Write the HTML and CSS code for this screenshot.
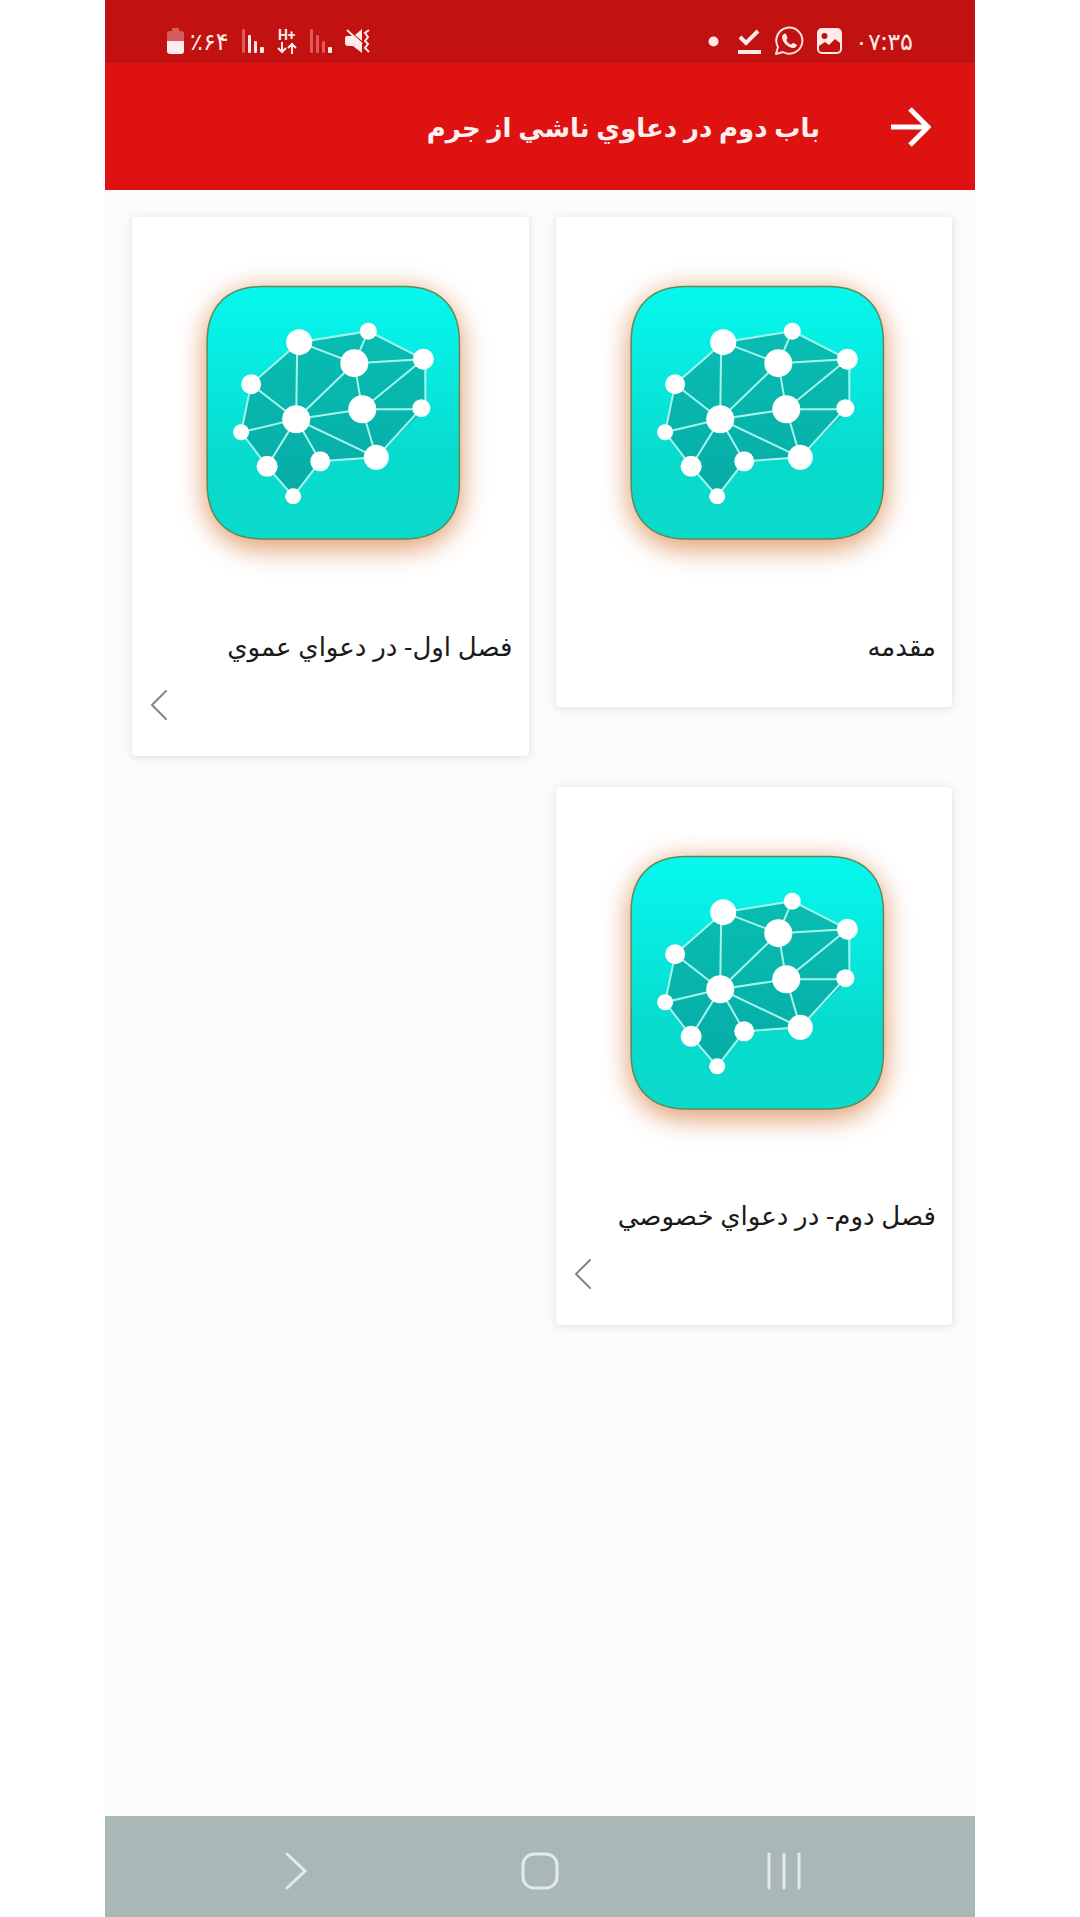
FILE: index.html
```html
<!DOCTYPE html>
<html lang="fa" dir="rtl">
<head>
  <meta charset="UTF-8" />
  <meta name="viewport" content="width=device-width, initial-scale=1.0"/>
  <title>باب دوم در دعاوي ناشي از جرم</title>
  <link rel="stylesheet" href="styles.css">
</head>
<body>

  <!-- shared drawings -->
  <svg class="defs" width="0" height="0" aria-hidden="true">
    <defs>
      <linearGradient id="tileFill" x1="0" y1="0" x2="0" y2="1">
        <stop offset="0" stop-color="#06f8ee"/>
        <stop offset="0.35" stop-color="#07e9df"/>
        <stop offset="0.7" stop-color="#08dacc"/>
        <stop offset="1" stop-color="#0adbcd"/>
      </linearGradient>
      <linearGradient id="brainFill" x1="0" y1="0" x2="0" y2="1">
        <stop offset="0" stop-color="#08bdb3"/>
        <stop offset="1" stop-color="#06aca5"/>
      </linearGradient>
      <filter id="glow" x="-20%" y="-20%" width="140%" height="145%">
        <feGaussianBlur stdDeviation="13"/>
      </filter>
    </defs>
    <symbol id="brain" viewBox="1 0 396 396">
      <rect x="73" y="72" width="258" height="260" rx="56" fill="#dc8a52" opacity="0.8" filter="url(#glow)"/>
      <path d="M131 69.5H273C309 69.5 328 90 328 125V266C328 301 309 321.5 273 321.5H131C95 321.5 76 301 76 266V125C76 90 95 69.5 131 69.5Z" fill="url(#tileFill)" stroke="#5f8a55" stroke-width="1.5"/>
      <path d="M168 125L237 114L292 142L294 191L245 240L189 244L162 279L136 249L110 215L120 167Z" fill="url(#brainFill)"/>
      <path d="M168 125L237 114L292 142M168 125L120 167L110 215L136 249L162 279L189 244L245 240L290 191M294 142V191M168 125L223 146L237 114M223 146L292 142L231 192H290M223 146L231 192L245 240L165 202L231 192M223 146L165 202L166 125M120 167L165 202L110 215M136 249L165 202L189 244" fill="none" stroke="#a5f5ee" stroke-width="2"/>
      <g fill="#fff">
        <circle cx="168" cy="125" r="13"/>
        <circle cx="237" cy="114" r="8.5"/>
        <circle cx="292" cy="142" r="10.5"/>
        <circle cx="223" cy="146" r="14"/>
        <circle cx="120" cy="167" r="10"/>
        <circle cx="165" cy="202" r="14"/>
        <circle cx="231" cy="192" r="14"/>
        <circle cx="290" cy="191" r="9"/>
        <circle cx="110" cy="215" r="8"/>
        <circle cx="136" cy="249" r="10.5"/>
        <circle cx="189" cy="244" r="10"/>
        <circle cx="245" cy="240" r="12.5"/>
        <circle cx="162" cy="279" r="8"/>
      </g>
    </symbol>
    <symbol id="chevron" viewBox="0 0 17 30">
      <path d="M15 1L1 15L15 29" fill="none" stroke="#858585" stroke-width="2" stroke-linecap="round" stroke-linejoin="round"/>
    </symbol>
  </svg>

  <div class="phone">
    <div class="status-bar">
      <div class="status-group">
        <span class="status-text">۰۷:۳۵</span>
        <svg width="25" height="26" viewBox="0 0 25 26" fill="none">
          <rect x="1" y="1" width="23" height="24" rx="4" stroke="#ffe9e9" stroke-width="2"/>
          <path fill="#ffe9e9" fill-rule="evenodd" d="M2 2H23V15L18 11L12 17L8 14L2 18ZM7.500 5A3 3 0 1 0 7.500 11A3 3 0 1 0 7.500 5Z"/>
        </svg>
        <svg width="30" height="30" viewBox="0 0 30 30">
          <path d="M2 28L4 21A13 13 0 1 1 9 26Z" fill="none" stroke="#ffdede" stroke-width="2" stroke-linejoin="round"/>
          <path d="M10 8C11 7 12 8 12.500 9L13.500 12C13.500 13 12 13.500 12.500 14.500C13.500 16.500 15 18 17 18.500C18 18.500 18.500 16.500 19.500 17L22.500 18.500C23.500 19.500 21.500 22 19.500 22C14 22 8 16 8 11C8 10 9 8.500 10 8Z" fill="#ffe9e9"/>
        </svg>
        <svg width="23" height="27" viewBox="0 0 23 27" fill="none" stroke="#ffe9e9">
          <path d="M2 9L8 15L20 3" stroke-width="4"/>
          <path d="M0 24H23" stroke-width="4"/>
        </svg>
        <svg class="dot" width="11" height="11" viewBox="0 0 11 11"><circle cx="5.500" cy="5.500" r="5" fill="#ffe9e9"/></svg>
      </div>
      <div class="status-group">
        <svg width="25" height="24" viewBox="0 0 25 24">
          <path d="M2 7H9L17 14V24L8 17H3Q0 17 0 14V9Q0 7 2 7ZM10 6L17 0V12Z" fill="#ffe9e9"/>
          <path d="M2 1L17 15" stroke="#ffe9e9" stroke-width="2"/>
          <path d="M24 1L20 4L23 8L20 12L23 15L20 19L24 23" fill="none" stroke="#ffe9e9" stroke-width="2"/>
        </svg>
        <svg width="22" height="24" viewBox="0 0 22 24" fill="#df5a5a">
          <rect x="0" y="0" width="3" height="24" rx="1"/>
          <rect x="6" y="6" width="3" height="18" rx="1"/>
          <rect x="12" y="12" width="3" height="12" rx="1"/>
          <rect x="18" y="18" width="4" height="6" rx="1" fill="#ffe9e9"/>
        </svg>
        <div class="network">
          <span>H+</span>
          <svg width="20" height="12" viewBox="0 0 20 12" fill="none" stroke="#ffe9e9" stroke-width="2">
            <path d="M5 0V11M1 6L5 10L9 6M15 12V1M11 6L15 2L19 6"/>
          </svg>
        </div>
        <svg width="22" height="24" viewBox="0 0 22 24" fill="#ffe9e9">
          <rect x="0" y="0" width="3" height="24" rx="1" fill="#df5a5a"/>
          <rect x="6" y="6" width="3" height="18" rx="1"/>
          <rect x="12" y="12" width="3" height="12" rx="1"/>
          <rect x="18" y="18" width="4" height="6" rx="1"/>
        </svg>
        <div class="battery">
          <span class="status-text">٪۶۴</span>
          <svg width="17" height="26" viewBox="0 0 17 26">
            <path d="M5 0H12V3H14Q17 3 17 6V13H0V6Q0 3 3 3H5Z" fill="#d75c5c"/>
            <path d="M0 13H17V23Q17 26 14 26H3Q0 26 0 23Z" fill="#ffebeb"/>
          </svg>
        </div>
      </div>
    </div>

    <header class="app-bar">
      <button type="button" class="back" aria-label="بازگشت">
        <svg width="40" height="40" viewBox="0 0 40 40" fill="none" stroke="#fff" stroke-width="5">
          <path d="M0 20H37M19 2L37 20L19 38"/>
        </svg>
      </button>
      <h1>باب دوم در دعاوي ناشي از جرم</h1>
    </header>

    <main class="grid">
      <a class="card" href="#intro">
        <svg class="card-image" viewBox="0 0 396 396" aria-hidden="true"><use href="#brain"/></svg>
        <div class="card-body">
          <h2>مقدمه</h2>
        </div>
      </a>
      <a class="card" href="#chapter-1">
        <svg class="card-image" viewBox="0 0 396 396" aria-hidden="true"><use href="#brain"/></svg>
        <div class="card-body">
          <h2>فصل اول- در دعواي عموي</h2>
          <svg class="more" width="17" height="30" aria-hidden="true"><use href="#chevron"/></svg>
        </div>
      </a>
      <a class="card" href="#chapter-2">
        <svg class="card-image" viewBox="0 0 396 396" aria-hidden="true"><use href="#brain"/></svg>
        <div class="card-body">
          <h2>فصل دوم- در دعواي خصوصي</h2>
          <svg class="more" width="17" height="30" aria-hidden="true"><use href="#chevron"/></svg>
        </div>
      </a>
    </main>

    <nav class="nav-bar">
      <button type="button" aria-label="برنامه‌های اخیر">
        <svg width="36" height="38" viewBox="0 0 36 38"><path d="M3 2V36M18 2V36M33 2V36"/></svg>
      </button>
      <button type="button" aria-label="خانه">
        <svg width="38" height="38" viewBox="0 0 38 38"><rect x="2" y="2" width="34" height="34" rx="11"/></svg>
      </button>
      <button type="button" aria-label="قبلی">
        <svg width="22" height="38" viewBox="0 0 22 38"><path d="M2 2L20 19L2 36"/></svg>
      </button>
    </nav>
  </div>

</body>
</html>
```
FILE: styles.css
```css
:root {
  --status-color: #c11111;
  --primary-color: #de1311;
  --page-color: #fbfbfb;
  --nav-color: #a9b7b7;
  --icon-color: #ffe9e9;
}

* {
  box-sizing: border-box;
}

body {
  margin: 0;
  background-color: #fff;
  font-family: "Noto Sans", "DejaVu Sans", sans-serif;
}

.defs {
  position: absolute;
}

svg {
  display: block;
  flex-shrink: 0;
}

button {
  padding: 0;
  border: none;
  background: none;
  cursor: pointer;
}

.phone {
  display: flex;
  flex-direction: column;
  max-width: 870px;
  min-height: 100vh;
  margin: 0 auto;
  background-color: var(--page-color);
}

.status-bar {
  display: flex;
  justify-content: space-between;
  height: 63px;
  padding: 19px 62px 0;
  background-color: var(--status-color);
}

.status-group {
  display: flex;
  align-items: center;
  gap: 13px;
  height: 44px;
}

.status-text {
  direction: ltr;
  font-size: 24px;
  line-height: 32px;
  color: var(--icon-color);
}

.dot {
  margin-right: 6px;
}

.battery {
  display: flex;
  align-items: center;
  gap: 6px;
}

.network {
  display: flex;
  flex-direction: column;
  align-items: center;
  direction: ltr;
  font-family: Roboto, sans-serif;
  font-size: 14px;
  font-weight: 700;
  line-height: 14px;
  color: var(--icon-color);
}

.app-bar {
  display: flex;
  align-items: center;
  gap: 71px;
  height: 127px;
  padding: 0 44px;
  background-color: var(--primary-color);
}

h1 {
  margin: 0;
  font-size: 26px;
  font-weight: 700;
  color: #fff0f0;
}

.grid {
  display: grid;
  grid-template-columns: 1fr 1fr;
  align-items: start;
  flex: 1;
  align-content: start;
  gap: 31px 27px;
  padding: 27px 23px 27px 27px;
}

.card {
  border-radius: 4px;
  background-color: #fff;
  box-shadow: 0 1px 8px rgba(0, 0, 0, 0.12);
  color: #1a1a1a;
  text-decoration: none;
}

.card-image {
  width: 100%;
}

.card-body {
  padding: 10px 16px 39px;
}

h2 {
  margin: 0;
  font-size: 26px;
  font-weight: 400;
  line-height: 44px;
}

.more {
  margin: 22px auto -3px 3px;
}

.nav-bar {
  display: flex;
  justify-content: center;
  height: 101px;
  padding-top: 8px;
  background-color: var(--nav-color);
}

.nav-bar button {
  display: flex;
  align-items: center;
  justify-content: center;
  width: 244px;
}

.nav-bar svg {
  fill: none;
  stroke: #e3eaea;
  stroke-width: 3;
  stroke-linecap: round;
}
```
